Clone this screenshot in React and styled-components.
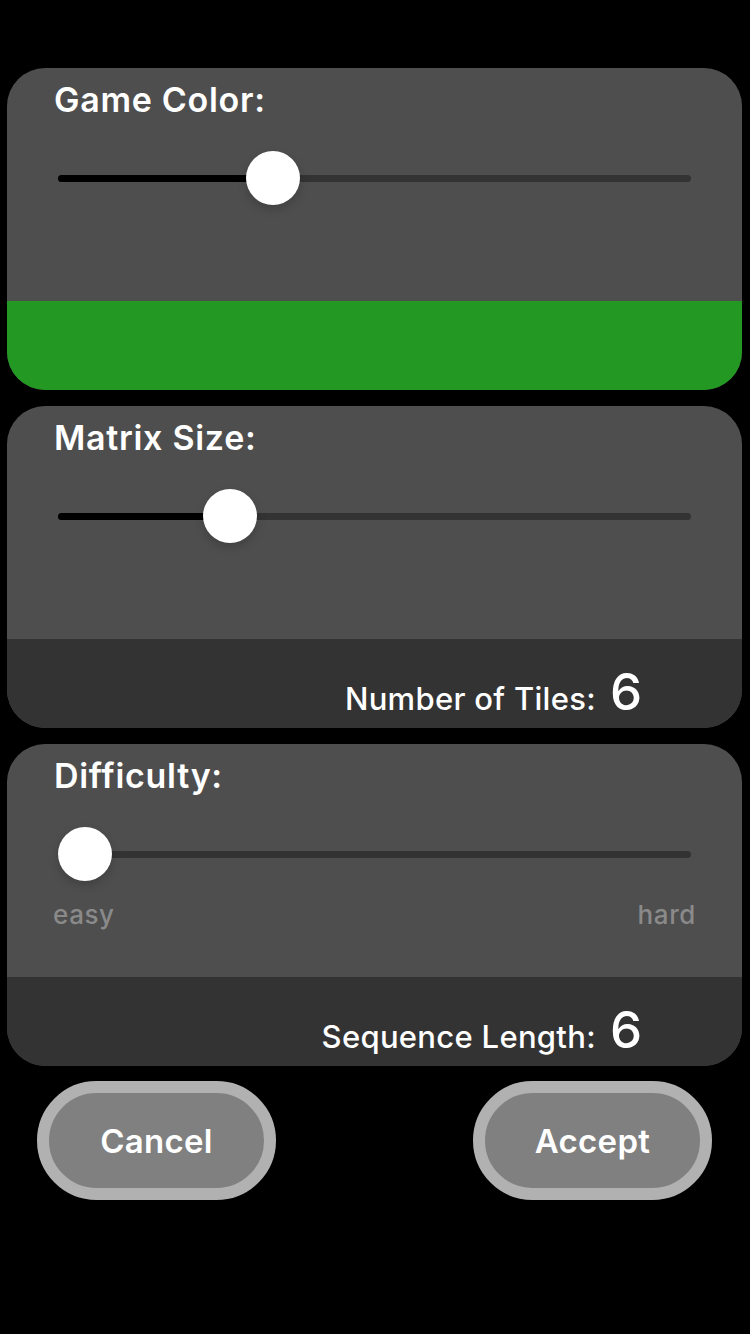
import React from 'react';
import styled, { createGlobalStyle } from 'styled-components';

const GlobalStyle = createGlobalStyle`
  html, body {
    margin: 0;
    padding: 0;
    background: #000;
  }
  body {
    font-family: Inter, "Open Sans", "Liberation Sans", sans-serif;
    color: #fff;
  }
`;

const Screen = styled.div`
  width: 750px;
  height: 1334px;
  background: #000;
  box-sizing: border-box;
  padding: 68px 8px 0 7px;
  display: flex;
  flex-direction: column;
  gap: 16px;
`;

const Card = styled.section`
  border-radius: 38px;
  overflow: hidden;
  background: #4e4e4e;
  display: flex;
  flex-direction: column;
`;

const CardBody = styled.div`
  height: 233px;
  box-sizing: border-box;
  padding-top: 12px;
`;

const Title = styled.h2`
  margin: 0 0 31px 47px;
  font-size: 34px;
  line-height: 40px;
  letter-spacing: 0.7px;
  font-weight: 600;
  color: #fff;
`;

const SliderWrap = styled.div`
  position: relative;
  height: 54px;
  margin: 0 51px;
`;

const Track = styled.div`
  position: absolute;
  left: 0;
  right: 0;
  top: 24px;
  height: 7px;
  border-radius: 4px;
  background: #333;
`;

const Fill = styled.div`
  position: absolute;
  left: 0;
  top: 24px;
  height: 7px;
  border-radius: 4px;
  background: #000;
`;

const Thumb = styled.div`
  position: absolute;
  top: 0;
  width: 54px;
  height: 54px;
  margin-left: -27px;
  border-radius: 50%;
  background: #fff;
  box-shadow: 0 4px 10px rgba(0, 0, 0, 0.18);
`;

const Labels = styled.div`
  display: flex;
  justify-content: space-between;
  margin: 19px 46px 0 46px;
  font-size: 26px;
  line-height: 30px;
  letter-spacing: 0.6px;
  font-weight: 500;
  color: #8a8a8a;
`;

const ColorStrip = styled.div`
  height: 89px;
  background: ${(p) => p.$color};
`;

const Footer = styled.div`
  height: 89px;
  background: #333;
  box-sizing: border-box;
  display: flex;
  justify-content: flex-end;
  align-items: flex-end;
  padding: 0 100px 11px 0;
`;

const FooterRow = styled.div`
  display: flex;
  align-items: baseline;
  gap: 14px;
`;

const FooterLabel = styled.span`
  font-size: 31px;
  letter-spacing: 0.3px;
  font-weight: 500;
  color: #fff;
`;

const FooterValue = styled.span`
  font-size: 51px;
  line-height: 1;
  font-weight: 500;
  color: #fff;
`;

const ButtonRow = styled.div`
  display: flex;
  justify-content: space-between;
  padding: 0 30px;
  margin-top: -1px;
`;

const PillButton = styled.button`
  width: 239px;
  height: 119px;
  box-sizing: border-box;
  border: 12px solid #b1b1b1;
  border-radius: 60px;
  background: #808080;
  color: #fff;
  font-family: Inter, "Open Sans", "Liberation Sans", sans-serif;
  font-size: 33px;
  letter-spacing: 0.3px;
  font-weight: 600;
  cursor: pointer;
`;

const Slider = ({ value }) => {
  const center = `calc(27px + (100% - 54px) * ${value})`;
  return (
    <SliderWrap>
      <Track />
      <Fill style={{ width: center }} />
      <Thumb style={{ left: center }} />
    </SliderWrap>
  );
};

const App = () => (
  <>
    <GlobalStyle />
    <Screen>
      <Card>
        <CardBody>
          <Title>Game Color:</Title>
          <Slider value={0.325} />
        </CardBody>
        <ColorStrip $color="#239823" />
      </Card>

      <Card>
        <CardBody>
          <Title>Matrix Size:</Title>
          <Slider value={0.25} />
        </CardBody>
        <Footer>
          <FooterRow>
            <FooterLabel>Number of Tiles:</FooterLabel>
            <FooterValue>6</FooterValue>
          </FooterRow>
        </Footer>
      </Card>

      <Card>
        <CardBody>
          <Title>Difficulty:</Title>
          <Slider value={0} />
          <Labels>
            <span>easy</span>
            <span>hard</span>
          </Labels>
        </CardBody>
        <Footer>
          <FooterRow>
            <FooterLabel>Sequence Length:</FooterLabel>
            <FooterValue>6</FooterValue>
          </FooterRow>
        </Footer>
      </Card>

      <ButtonRow>
        <PillButton>Cancel</PillButton>
        <PillButton>Accept</PillButton>
      </ButtonRow>
    </Screen>
  </>
);

export default App;
